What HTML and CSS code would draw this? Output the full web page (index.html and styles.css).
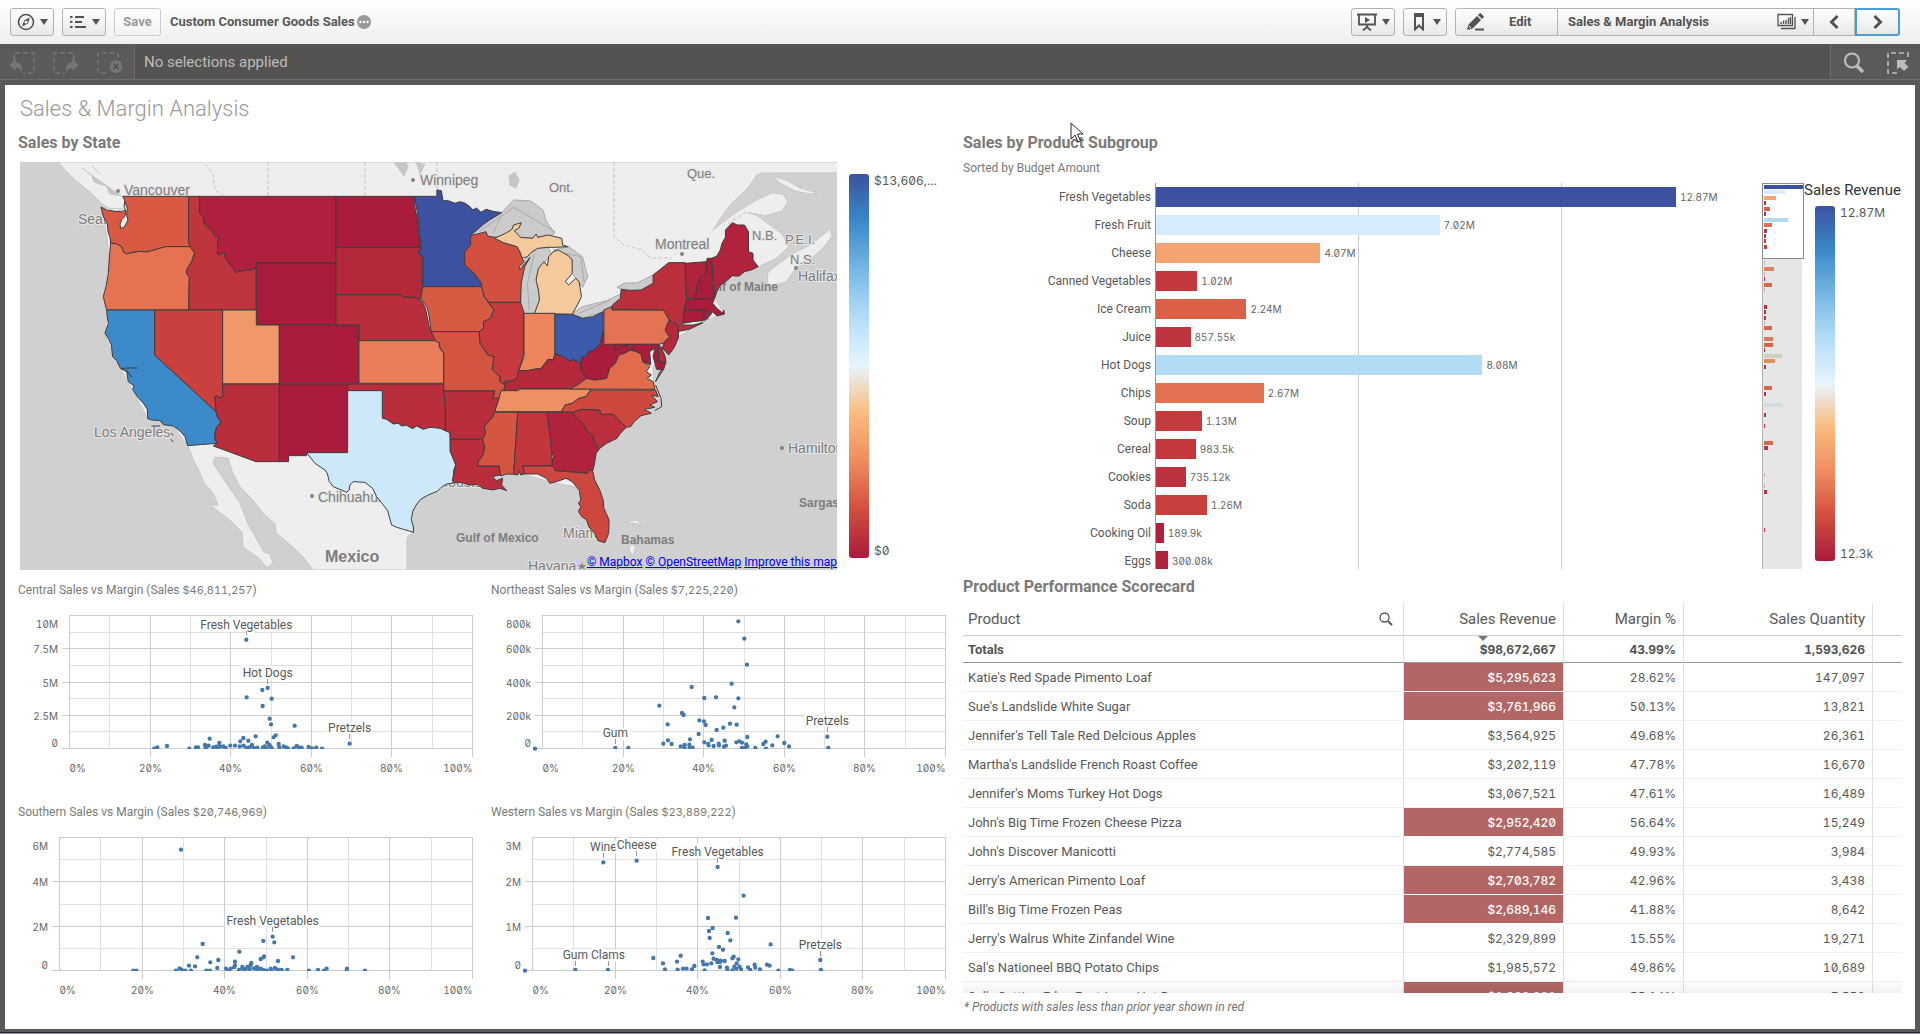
FILE: index.html
```
<!DOCTYPE html>
<html lang="en">
<head>
    <meta charset="UTF-8">
    <meta name="viewport" content="width=device-width, initial-scale=1.0">
    <title>Custom Consumer Goods Sales</title>
    <link rel="stylesheet" href="styles.css">
</head>
<body>
    <header class="toolbar">
        <button class="btn" aria-label="Navigation">
            <svg width="18" height="18" viewBox="0 0 18 18"><circle cx="9" cy="9" r="7.5" fill="none" stroke="#545352" stroke-width="1.6"/><path d="M13 4.500 10.800 10.800 5 13.500 7.200 7.200Z" fill="#545352"/><circle cx="9" cy="9" r="1.500" fill="#f6f6f6"/></svg>
            <i class="caret"></i>
        </button>
        <button class="btn" aria-label="Menu">
            <svg width="18" height="18" viewBox="0 0 18 18"><path d="M1 4h2.500M1 9h2.500M1 14h2.500M6 4h9M6 9h7M6 14h11" stroke="#545352" stroke-width="2"/></svg>
            <i class="caret"></i>
        </button>
        <button class="btn btn-save" disabled>Save</button>
        <span class="app-name">Custom Consumer Goods Sales</span>
        <svg width="14" height="14" viewBox="0 0 14 14"><circle cx="7" cy="7" r="7" fill="#9a9a9a"/><circle cx="3.500" cy="7" r="1.200" fill="#fff"/><circle cx="7" cy="7" r="1.200" fill="#fff"/><circle cx="10.500" cy="7" r="1.200" fill="#fff"/></svg>
        <div class="toolbar-right">
            <button class="btn" aria-label="Stories">
                <svg width="20" height="18" viewBox="0 0 20 18"><path d="M0 1.500h20M2 2v9.500h16V2M10 12v3M6 17.500l4-3.500 4 3.500" fill="none" stroke="#545352" stroke-width="1.800"/><path d="M8 4v6l5-3Z" fill="#545352"/></svg>
                <i class="caret"></i>
            </button>
            <button class="btn" aria-label="Bookmarks">
                <svg width="18" height="18" viewBox="0 0 18 18"><path d="M5 1h8v15.500l-4-4-4 4Z" fill="none" stroke="#545352" stroke-width="2"/><path d="M4 0h10v4H4Z" fill="#545352"/></svg>
                <i class="caret"></i>
            </button>
            <div class="btn-group">
                <button class="seg seg-edit">
                    <svg width="18" height="18" viewBox="0 0 18 18"><path d="M1 17 2.500 11.500 11 3l4 4-8.500 8.500ZM12 2l1.500-1.500c.5-.5 1-.5 1.500 0L17.500 3c.5.500.5 1 0 1.500L16 6Z" fill="#545352"/><path d="M3 13l2 2" stroke="#fff"/><path d="M9 16.500h9" stroke="#545352" stroke-width="2"/></svg>
                    <span>Edit</span>
                </button>
                <button class="seg seg-sheet">
                    <span>Sales &amp; Margin Analysis</span>
                    <svg width="20" height="18" viewBox="0 0 20 18"><path d="M1 1.500h14.500v11H1ZM18 4v11.500H4" fill="none" stroke="#545352" stroke-width="1.300"/><path d="M4 11V9M6.500 11V7.500M9 11V7M11.500 11V5M13.500 11V4" stroke="#545352" stroke-width="1.400"/></svg>
                    <i class="caret"></i>
                </button>
                <button class="seg seg-prev" aria-label="Previous sheet">
                    <svg width="12" height="14" viewBox="0 0 12 14"><path d="M9.500 1 3.500 7l6 6" fill="none" stroke="#545352" stroke-width="3"/></svg>
                </button>
                <button class="seg seg-next" aria-label="Next sheet">
                    <svg width="12" height="14" viewBox="0 0 12 14"><path d="M2.500 1l6 6-6 6" fill="none" stroke="#545352" stroke-width="3"/></svg>
                </button>
            </div>
        </div>
    </header>

    <div class="selections">
        <div class="sel-tools">
            <button class="sel-btn" aria-label="Step back" disabled>
                <svg width="26" height="22" viewBox="0 0 26 22"><path d="M5 8V1h20v20H14" fill="none" stroke="#777674" stroke-width="1.600" stroke-dasharray="5 3"/><path d="M0 13l7-6v3.500c5 0 6.500 4 6 10-1.500-3.500-3-4.500-6-4.500v3Z" fill="#777674"/></svg>
            </button>
            <button class="sel-btn" aria-label="Step forward" disabled>
                <svg width="26" height="22" viewBox="0 0 26 22"><path d="M21 8V1H1v20h11" fill="none" stroke="#777674" stroke-width="1.600" stroke-dasharray="5 3"/><path d="M26 13l-7-6v3.500c-5 0-6.500 4-6 10 1.500-3.500 3-4.500 6-4.500v3Z" fill="#777674"/></svg>
            </button>
            <button class="sel-btn" aria-label="Clear all selections" disabled>
                <svg width="26" height="22" viewBox="0 0 26 22"><path d="M21 6V1H1v20h11" fill="none" stroke="#777674" stroke-width="1.600" stroke-dasharray="5 3"/><circle cx="19" cy="14.500" r="6.500" fill="#777674"/><path d="M16.500 12l5 5m0-5-5 5" stroke="#545352" stroke-width="1.800"/></svg>
            </button>
        </div>
        <p class="sel-text">No selections applied</p>
        <div class="sel-tools sel-right">
            <button class="sel-btn" aria-label="Search">
                <svg width="22" height="22" viewBox="0 0 22 22"><circle cx="9" cy="8.500" r="7" fill="none" stroke="#bdbcba" stroke-width="2.200"/><path d="M14 14l6 6" stroke="#bdbcba" stroke-width="3.500"/></svg>
            </button>
            <button class="sel-btn" aria-label="Selections tool">
                <svg width="22" height="22" viewBox="0 0 22 22"><path d="M21 5V1H1v20h12" fill="none" stroke="#bdbcba" stroke-width="1.600" stroke-dasharray="5 3"/><path d="M10 8h10l-2.500 3 4 4-4.500 4-4-4-3 2.500Z" fill="#bdbcba"/></svg>
            </button>
        </div>
    </div>

    <main class="sheet">
        <h1>Sales &amp; Margin Analysis</h1>
        <div class="columns">
            <section class="col">
                <h2>Sales by State</h2>
                <div class="map-row">
                    <div class="map">
                        <svg class="map-svg" viewBox="0 0 818 408" preserveAspectRatio="xMinYMin slice">
                            <rect width="818" height="408" fill="#d0d0d0"/>
                            <!-- land -->
                            <g class="land">
                                <path d="M38 0 45 8 55 18 70 30 82 42 95 50 103 47 81 46 87 75 89 100 83 135 87 150 85 171 93 195 107 218 128 257 153 264 168 284 173 297 180 311 184 321 193 331 198 343 190 343 210 358 222 370 223 385 240 397 247 406 253 401 250 392 244 390 237 378 228 362 220 341 207 322 193 301 195 295 208 296 212 309 220 325 231 336 243 351 255 362 256 371 273 385 284 396 293 408H387L387 375 394 370 392 345 401 336 421 325 433 319 470 320 478 312 500 311 530 320 556 325 561 340 576 378 585 381 588 355 573 310 580 286 606 265 628 250 634 230 633 205 658 175 680 161 704 151 694 135 705 120 738 105 755 97 769 85 762 72 750 63 735 52 728 51 745 54 762 49 768 40 763 32 752 31 738 37 715 51 693 68 700 57 711 42 727 27 737 13 742 11H818V0Z"/>
                                <path d="M747 122 748 110 757 103 772 92 790 83 799 76 810 67 812 74 804 85 792 96 776 106 766 120 755 123Z"/>
                                <path d="M752 14 766 18 780 26 798 31 790 32 775 29 760 21Z"/>
                                <path d="M604 360l14-2 4 8-4-4zM610 382l6 2-3 10-4-6z"/>
                            </g>
                            <!-- water, borders and provinces -->
                            <path d="M62 6l10 8 2 6 12 4 4 8 12 2M72 4l8 8M374 0l10 14 4-9-2-5M396 0l4 12 5-10M489 14l6-4 4 8-3 8-6-3Z" fill="#c6c6c6" stroke="#c6c6c6"/>
                            <path d="M248 0v34M345 0v34M417 0v28M594 0v75l10 8 18 5 8 8h22M185 2l8 10 2 16 8 5M708 62l18-12 20 4" fill="none" stroke="#c4c4c4" stroke-dasharray="4 2"/>
                            <g transform="translate(380 -12) scale(.3444 .3333)" fill="#cbcbcb" stroke="#aaa" class="thin">
                                <path d="M205 257 225 230 295 188 330 150 380 153 415 180 425 215 450 250 430 260 350 265 330 248 270 262Z"/>
                                <path d="M355 340 375 312 400 295 430 292 440 312 412 348 397 390 405 450 390 495 365 493 350 457Z"/>
                                <path d="M445 300 490 290 530 320 545 380 530 412 500 370 500 330Z"/>
                                <path d="M500 490 530 470 600 452 645 430 640 450 590 485 530 505Z"/>
                                <path d="M630 412 650 400 690 398 735 375 735 400 700 420 645 418Z"/>
                                <path d="M230 245 330 172 450 245M270 250 295 195M375 480 370 400 390 310M480 310 525 320 535 400M520 490 610 450" fill="none"/>
                            </g>
                            <g class="place">
                                <text x="104" y="33">Vancouver</text>
                                <text x="58" y="62">Seattle</text>
                                <text x="74" y="275">Los Angeles</text>
                                <text x="298" y="340">Chihuahua</text>
                                <text x="400" y="23">Winnipeg</text>
                                <text x="635" y="87">Montreal</text>
                                <text x="778" y="119">Halifax</text>
                                <text x="768" y="291">Hamilton</text>
                                <text x="543" y="376">Miami</text>
                                <text x="508" y="409">Havana</text>
                                <text x="418" y="325">Houston</text>
                            </g>
                            <g class="place region">
                                <text x="529" y="30">Ont.</text>
                                <text x="667" y="16">Que.</text>
                                <text x="732" y="78">N.B.</text>
                                <text x="765" y="82">P.E.I.</text>
                                <text x="770" y="102">N.S.</text>
                            </g>
                            <g class="place sea">
                                <text x="758" y="129" text-anchor="end">Gulf of Maine</text>
                                <text x="436" y="380">Gulf of Mexico</text>
                                <text x="601" y="382">Bahamas</text>
                                <text x="779" y="345">Sargasso Sea</text>
                                <text x="305" y="400" class="country">Mexico</text>
                            </g>
                            <g fill="#85857b">
                                <circle cx="98" cy="29" r="2"/><circle cx="393" cy="18" r="2"/><circle cx="662" cy="92" r="2"/><circle cx="776" cy="106" r="2"/><circle cx="762" cy="286" r="2"/><circle cx="292" cy="334" r="2"/>
                                <path d="M562 400l1 3h3l-2 2 1 3-3-2-3 2 1-3-2-2h3Z"/>
                            </g>
                            <!-- western and plains states -->
                            <g class="states" transform="translate(-20 -12) scale(.3333)">
                                <path fill="#d95942" d="M303 171 320 180 345 184 365 185 378 180 374 150 368 139H566V275L570 290H497L480 295 455 302 440 306 420 304 395 308 380 312 370 305 365 290 350 282 332 279 330 262 324 245 322 220 310 200Z"/>
                                <path fill="#e8e8e8" d="M374 155 382 175 380 195 384 210 378 222 372 232 362 235 360 222 366 208 374 200 378 185 372 170Z"/>
                                <path fill="#e57251" d="M332 279 350 282 365 290 370 305 380 312 395 308 420 304 440 306 455 302 480 295 497 290H570L584 308 575 335 560 360 560 370 568 382 566 480H320L316 465 310 440 318 410 325 370 329 310Z"/>
                                <path fill="#c0343c" d="M566 139H599V190L612 205 612 222 635 240 645 258 655 260 652 312 660 315 672 306 676 322 690 345 698 352 708 368 720 363 750 360 762 355 769 362V480H566L568 382 560 370 560 360 575 335 584 308 570 290 566 275Z"/>
                                <path fill="#b01f3d" d="M599 139H1008V339H769V362L762 355 750 360 720 363 708 368 698 352 690 345 676 322 672 306 660 315 652 312 655 260 645 258 635 240 612 222 612 205 599 190Z"/>
                                <path fill="#ab1b3b" d="M769 339H1008V525H769Z"/>
                                <path fill="#3c8ac9" d="M320 480H464V615L648 785 652 800 663 816 650 832 645 850 645 868 652 880 563 887 555 860 540 843 520 828 490 824 480 812 455 810 443 806 442 778 430 760 412 740 398 718 402 708 385 695 380 665 362 656 350 632 338 620 334 585 325 565 315 550 325 520 322 500Z"/>
                                <path fill="none" d="M365 656 382 654 412 654M380 660l15 22M455 828h25M512 850l8 6M512 868l9 8"/>
                                <path fill="#c9403e" d="M464 480H668V740L660 744 652 738 645 740 648 785 464 615Z"/>
                                <path fill="#f0986a" d="M668 480H769V525H838V702H668Z"/>
                                <path fill="#ab1b3b" d="M838 525H1077V700H838Z"/>
                                <path fill="#b92d3c" d="M668 702H838V935H768L640 888 652 880 645 868 645 850 650 832 663 816 652 800 648 785 645 740 652 738 660 744 668 740Z"/>
                                <path fill="#ab1b3b" d="M838 702H1043V908H920V917H866V935H838Z"/>
                                <path fill="#ab1b3b" d="M1008 139H1243L1246 180 1254 210 1256 250 1264 292H1008Z"/>
                                <path fill="#b5283c" d="M1008 292H1264L1256 308 1268 322V410L1264 425 1262 450 1240 442 1215 442 1198 434H1008Z"/>
                                <path fill="#b92d3c" d="M1008 434H1198L1215 442 1240 442 1262 450 1275 470 1282 500 1289 538 1308 572H1077V525H1008Z"/>
                                <path fill="#e87d57" d="M1077 572H1308L1318 580 1318 592 1331 610V700H1077Z"/>
                                <path fill="#b92d3c" d="M1043 702H1331L1336 770V842L1320 835 1290 832 1270 838 1250 828 1238 836 1220 826 1205 828 1195 820 1180 822 1160 808 1147 805V722H1043Z"/>
                                <path fill="#cde9f9" d="M1043 722H1147V805L1160 808 1180 822 1195 820 1205 828 1220 826 1238 836 1250 828 1270 838 1290 832 1320 835 1336 842 1350 848 1351 905 1362 925 1367 945 1360 965 1362 990 1358 1000 1340 1002 1324 1012 1312 1024 1285 1035 1262 1048 1248 1066 1238 1085 1234 1108 1240 1130 1241 1147 1210 1138 1190 1132 1175 1125 1163 1082 1150 1065 1130 1040 1118 1015 1095 997 1060 995 1050 1005 1048 1020 1040 1027 1000 1010 988 995 982 970 975 960 945 940 920 908H1043Z"/>
                            </g>
                            <!-- eastern states -->
                            <g class="states" transform="translate(380 -12) scale(.3444 .3333)">
                                <path fill="#3c51a0" d="M42 139H107V120L120 122 125 152 140 152 160 160 175 155 190 160 205 172 212 180 222 174 235 187 250 178 270 184 295 188 260 210 240 225 205 257V285L188 305 188 345 215 370 237 400V410H66V322L54 308 62 292 56 250 54 210Z"/>
                                <path fill="#d75a43" d="M66 410H237L245 440 258 460 273 480 262 505 243 515 243 535 230 545H90L85 500 78 470 66 455 62 440Z"/>
                                <path fill="#d35040" d="M205 257 250 245 254 258 275 262 300 278 340 290 348 305 355 325 360 335 346 350 348 358 378 322 362 350 352 400 350 457H258L245 440 237 410V400L215 370 188 345V305L205 285Z"/>
                                <path fill="#f4ca9c" d="M275 265 310 248 325 238 330 225 352 218 345 235 332 242 350 262 385 265 395 252 400 262 430 255 470 265 472 285 488 290 450 292 430 292 400 295 380 308 370 320 355 325 348 305 340 290 300 278Z"/>
                                <path fill="#f4ca9c" d="M445 305 460 300 490 318 500 330 500 370 480 395 490 405 510 385 520 395 527 440 515 465 500 493 390 491 405 450 402 420 395 390 402 355 418 335 428 348 432 320Z"/>
                                <path fill="#c63a3d" d="M258 457H350L360 490V600L355 630 345 660 340 685 322 695 307 690 303 705 290 695 290 680 268 660 272 620 255 615 232 580 230 545 243 535 243 515 262 505 273 480Z"/>
                                <path fill="#ee855b" d="M360 490H450V612L445 630 430 628 410 655 390 658 370 662 345 662 360 620Z"/>
                                <path fill="#3c5bab" d="M450 493H500L530 505 560 500 590 485V545L582 580 575 590 560 602 548 605 540 620 528 622 525 640 505 630 490 632 475 620 450 612Z"/>
                                <path fill="#b5283c" d="M450 612 475 620 490 632 505 630 525 640 524 655 528 665 542 685 515 705 492 717 340 716V722H303L307 695 322 695 340 685 345 662 370 662 390 658 410 655 430 628 445 630Z"/>
                                <path fill="#d35440" d="M90 545H230L232 580 255 615 272 620 268 660 290 680 290 695 305 705 300 725 288 745H270L275 723H127V610L115 590 115 578 105 575Z"/>
                                <path fill="#b92d3c" d="M127 723H275L270 745H288L275 785 270 800 245 830 248 850 240 868H146L145 848 132 842 132 770Z"/>
                                <path fill="#b92d3c" d="M146 868H240L246 890 242 915 230 930 225 948H288L290 975 268 980 280 992 298 985 295 1005 310 1022 290 1015 270 1020 240 1015 225 1003 200 1005 180 998 155 998 152 990 162 945 146 905Z"/>
                                <path fill="#ef8f63" d="M293 722H345V717H555L540 740 520 745 500 760 480 765 468 785H275L288 745Z"/>
                                <path fill="#d55541" d="M275 787H342L330 973 310 972 292 978 288 948H225L230 930 242 915 246 890 240 868 248 850 245 830 270 800Z"/>
                                <path fill="#c2363c" d="M342 787H427L440 860 447 890 440 915 445 948H357L362 972 350 975 345 962 342 975 330 973Z"/>
                                <path fill="#b1223c" d="M427 787H500L510 800 535 825 545 845 560 858 565 880 580 895 570 910 565 940 560 962 550 960 545 970 450 962 440 945 445 920 440 900Z"/>
                                <path fill="#cd473e" d="M357 948H445L450 962 545 970 550 958 560 965 565 990 580 1020 590 1050 592 1075 607 1110 606 1150 595 1178 575 1172 565 1150 548 1130 542 1110 528 1100 518 1085 525 1070 518 1060 525 1050 520 1020 500 995 482 985 455 995 435 1000 425 985 400 972 362 972Z"/>
                                <path fill="#bb2e3c" d="M500 787 525 778 580 780 585 793H620L657 832 640 850 630 865 600 880 580 895 565 880 560 858 545 845 535 825 510 800Z"/>
                                <path fill="#cf483e" d="M468 785 480 765 500 760 520 745 540 740 555 720H742L750 740 730 735 748 755 725 765 740 772 710 778 730 790 700 797 680 815 670 830 657 832 620 793H585L580 780 525 778 500 787Z"/>
                                <path fill="none" d="M742 705 758 745 760 770 740 782"/>
                                <path fill="#e26b4c" d="M492 717 515 705 542 685 565 690 600 685 608 655 625 640 635 615 655 608 668 600 690 605 700 612 705 635 725 650 715 665 730 675 718 685 735 695 740 718ZM765 658 755 665 742 695Z"/>
                                <path fill="#ab1b3b" d="M590 545 592 583H625V603L640 592 660 585 680 603 668 600 655 608 635 615 625 640 608 655 600 685 565 690 542 685 528 665 524 655 528 622 540 620 548 605 560 602 575 590 582 580Z"/>
                                <path fill="#e37352" d="M592 480 615 470V480H765L782 510 770 540 782 560 765 580 752 583H592Z"/>
                                <path fill="#ab1b3b" d="M625 583H750L752 637H772L765 660 745 658 735 620 740 595 725 605 728 645 705 635 700 612 685 605 665 586 640 592 625 603Z"/>
                                <path fill="#b5283c" d="M750 583 758 590 770 620 772 637H752Z"/>
                                <path fill="#b5283c" d="M782 510 810 528 808 565 795 595 780 615 762 595 765 580 782 560 770 540Z"/>
                                <path fill="#bb2e3c" d="M617 478V465L640 445 642 418 670 422 700 420 735 400V375L780 338H828L832 445 825 478 820 525 850 525 880 518 840 538 805 545 810 528 782 510 765 480Z"/>
                                <path fill="#b1223c" d="M828 340 890 335 888 370 870 385 862 410 858 445H832Z"/>
                                <path fill="#ab1b3b" d="M890 335 892 325 905 325 910 420 915 440 895 447H858L862 410 870 385 888 370Z"/>
                                <path fill="#ab1b3b" d="M832 447H895L915 440 908 460 920 475 938 490 940 480 942 492 920 498 908 485 898 500 893 480H825Z"/>
                                <path fill="#ab1b3b" d="M825 480H880V512L850 515 822 520ZM882 480H893L895 505 882 512Z"/>
                                <path fill="#b1223c" d="M905 325 920 318 930 300 935 280 945 262 945 240 965 218 980 225 1000 225 1012 245V305L1025 310 1025 330 1040 350 1020 360 1000 365 985 378 965 378 945 395 930 405 920 425 915 440Z"/>
                            </g>
                        </svg>
                        <div class="attribution">
                            <a href="#">© Mapbox</a> <a href="#">© OpenStreetMap</a> <a href="#">Improve this map</a>
                        </div>
                    </div>
                    <div class="legend map-legend">
                        <div class="ramp"></div>
                        <div class="legend-labels num"><span>$13,606,...</span><span>$0</span></div>
                    </div>
                </div>
                <div class="scatters">
                    <figure class="scatter" id="central">
                        <figcaption>Central Sales vs Margin (Sales <span class="num">$46,811,257</span>)</figcaption>
                    </figure>
                    <figure class="scatter" id="northeast">
                        <figcaption>Northeast Sales vs Margin (Sales <span class="num">$7,225,220</span>)</figcaption>
                    </figure>
                    <figure class="scatter" id="southern">
                        <figcaption>Southern Sales vs Margin (Sales <span class="num">$20,746,969</span>)</figcaption>
                    </figure>
                    <figure class="scatter" id="western">
                        <figcaption>Western Sales vs Margin (Sales <span class="num">$23,889,222</span>)</figcaption>
                    </figure>
                </div>
            </section>

            <section class="col">
                <h2 class="tight">Sales by Product Subgroup</h2>
                <p class="subtitle">Sorted by Budget Amount</p>
                <div class="bar-row">
                    <div class="bars" id="bars"></div>
                    <svg class="minimap" id="minimap" width="42" height="386" viewBox="0 0 42 386"></svg>
                    <div class="bar-legend">
                        <p class="legend-title">Sales Revenue</p>
                        <div class="legend">
                            <div class="ramp"></div>
                            <div class="legend-labels num"><span>12.87M</span><span>12.3k</span></div>
                        </div>
                    </div>
                </div>
                <h2 class="table-title">Product Performance Scorecard</h2>
                <div class="table-clip">
                    <table>
                        <colgroup><col class="c-product"><col class="c-revenue"><col class="c-margin"><col class="c-qty"><col class="c-pad"></colgroup>
                        <thead>
                            <tr>
                                <th class="left">
                                    <div class="th-flex">Product
                                        <button class="th-search" aria-label="Search product"><svg width="14" height="14" viewBox="0 0 14 14"><circle cx="5.500" cy="5.500" r="4.500" fill="none" stroke="#545352" stroke-width="1.300"/><path d="M9 9l4 4" stroke="#545352" stroke-width="2"/></svg></button>
                                    </div>
                                </th>
                                <th class="sorted">Sales Revenue</th><th>Margin %</th><th>Sales Quantity</th><th></th>
                            </tr>
                            <tr class="totals"><td>Totals</td><td>$98,672,667</td><td>43.99%</td><td>1,593,626</td><td></td></tr>
                        </thead>
                        <tbody>
                            <tr><td>Katie's Red Spade Pimento Loaf</td><td class="low">$5,295,623</td><td>28.62%</td><td>147,097</td><td></td></tr>
                            <tr><td>Sue's Landslide White Sugar</td><td class="low">$3,761,966</td><td>50.13%</td><td>13,821</td><td></td></tr>
                            <tr><td>Jennifer's Tell Tale Red Delcious Apples</td><td>$3,564,925</td><td>49.68%</td><td>26,361</td><td></td></tr>
                            <tr><td>Martha's Landslide French Roast Coffee</td><td>$3,202,119</td><td>47.78%</td><td>16,670</td><td></td></tr>
                            <tr><td>Jennifer's Moms Turkey Hot Dogs</td><td>$3,067,521</td><td>47.61%</td><td>16,489</td><td></td></tr>
                            <tr><td>John's Big Time Frozen Cheese Pizza</td><td class="low">$2,952,420</td><td>56.64%</td><td>15,249</td><td></td></tr>
                            <tr><td>John's Discover Manicotti</td><td>$2,774,585</td><td>49.93%</td><td>3,984</td><td></td></tr>
                            <tr><td>Jerry's American Pimento Loaf</td><td class="low">$2,703,782</td><td>42.96%</td><td>3,438</td><td></td></tr>
                            <tr><td>Bill's Big Time Frozen Peas</td><td class="low">$2,689,146</td><td>41.88%</td><td>8,642</td><td></td></tr>
                            <tr><td>Jerry's Walrus White Zinfandel Wine</td><td>$2,329,899</td><td>15.55%</td><td>19,271</td><td></td></tr>
                            <tr><td>Sal's Nationeel BBQ Potato Chips</td><td>$1,985,572</td><td>49.86%</td><td>10,689</td><td></td></tr>
                            <tr><td>Sal's Cutting Edge Foot-Long Hot Dogs</td><td class="low">$1,982,981</td><td>55.14%</td><td>7,552</td><td></td></tr>
                        </tbody>
                    </table>
                </div>
                <p class="note">* Products with sales less than prior year shown in red</p>
            </section>
        </div>
    </main>
    <div class="edge"></div>
    <svg class="pointer" width="14" height="21" viewBox="0 0 14 21"><path d="M1 1v16l4-4 3 7 2.500-1-3-7H13Z" fill="#fff" stroke="#223"/></svg>
    <script src="charts.js"></script>
</body>
</html>
```

FILE: styles.css
```
* {
    box-sizing: border-box;
}
body {
    margin: 0;
    height: 100vh;
    display: flex;
    flex-direction: column;
    overflow: hidden;
    background: #595856;
    color: #595959;
    font-family: Roboto, "Liberation Sans", sans-serif;
    font-size: 13px;
}
h1, h2, p, figure {
    margin: 0;
}
button {
    font: inherit;
    color: #545352;
    cursor: pointer;
}
svg {
    flex-shrink: 0;
}
.num {
    font-family: Inter, Roboto, sans-serif;
    font-feature-settings: "zero", "tnum";
}

/* toolbar */
.toolbar {
    height: 44px;
    flex-shrink: 0;
    display: flex;
    align-items: center;
    padding: 0 20px 1px 10px;
    background: linear-gradient(#fff, #efefef);
    font-weight: bold;
}
.btn {
    width: 44px;
    height: 28px;
    margin-right: 8px;
    padding: 0;
    display: flex;
    align-items: center;
    justify-content: center;
    gap: 5px;
    border: 1px solid #b3b3b3;
    border-radius: 3px;
    background: linear-gradient(#fff, #e8e8e8);
}
.btn-save {
    width: 47px;
    color: #9a9a9a;
    border-color: #ccc;
    background: linear-gradient(#fff, #f2f2f2);
}
.caret {
    border: 4px solid transparent;
    border-top: 6px solid #545352;
    border-bottom: 0;
}
.app-name {
    margin: 0 2px 0 1px;
}
.toolbar-right {
    margin-left: auto;
    display: flex;
    align-items: center;
}
.btn-group {
    display: flex;
}
.seg {
    height: 28px;
    display: flex;
    align-items: center;
    justify-content: center;
    padding: 0 10px;
    border: 1px solid #b3b3b3;
    border-left-width: 0;
    background: linear-gradient(#fff, #e8e8e8);
}
.seg-edit {
    width: 103px;
    justify-content: flex-start;
    gap: 25px;
    border-left-width: 1px;
    border-radius: 3px 0 0 3px;
}
.seg-sheet {
    width: 256px;
    gap: 4px;
    padding-right: 4px;
}
.seg-sheet span {
    margin-right: auto;
}
.seg-prev {
    width: 41px;
}
.seg-next {
    width: 45px;
    border: 2px solid #4a9fd3;
    border-radius: 0 3px 3px 0;
}

/* selections bar */
.selections {
    height: 36px;
    flex-shrink: 0;
    display: flex;
    background: #545352;
    border-bottom: 1px solid #6e6d6b;
}
.sel-tools {
    width: 135px;
    display: flex;
    align-items: center;
    gap: 18px;
    padding-left: 9px;
    background: #5b5a58;
    border-right: 1px solid #6e6d6b;
}
.sel-btn {
    display: flex;
    padding: 2px 0 0;
    border: 0;
    background: none;
}
.sel-text {
    flex: 1;
    padding-left: 9px;
    font-size: 15px;
    line-height: 36px;
    color: #bdbcba;
}
.sel-right {
    width: 90px;
    gap: 22px;
    padding-left: 12px;
    border-right: 0;
    border-left: 1px solid #6e6d6b;
}

/* sheet */
.sheet {
    flex: 1;
    min-height: 0;
    margin: 5px 5px 3px;
    padding: 9px 13px 0;
    background: #fff;
    overflow: hidden;
}
h1 {
    padding-left: 2px;
    font-size: 22px;
    font-weight: 300;
    line-height: 30px;
    color: #999;
}
h2 {
    margin-bottom: 8px;
    font-size: 16px;
    line-height: 22px;
    color: #7b7a78;
}
.columns {
    display: grid;
    grid-template-columns: 927fr 939fr;
    gap: 18px;
    margin-top: 8px;
}
.col {
    min-width: 0;
}
.map-row {
    height: 408px;
    display: flex;
    gap: 12px;
    padding-left: 2px;
}
.map {
    position: relative;
    flex: 1;
    overflow: hidden;
}
.map-svg {
    display: block;
    width: 100%;
    height: 100%;
}
.land {
    fill: #eee;
    stroke: #c8c8c8;
    stroke-width: 1;
}
.states path {
    stroke: #3d3d3d;
    stroke-width: 1px;
    stroke-linejoin: round;
    vector-effect: non-scaling-stroke;
}
.thin path {
    vector-effect: non-scaling-stroke;
}
.place {
    font-family: "Liberation Sans", sans-serif;
    font-size: 14px;
    fill: #7d7d7d;
    stroke: #e6e6e6;
    stroke-width: 2px;
    paint-order: stroke;
}
.region {
    font-size: 13px;
}
.sea {
    font-size: 12px;
    font-weight: bold;
    stroke: none;
}
.country {
    font-size: 16px;
}
.attribution {
    position: absolute;
    right: 0;
    bottom: 0;
    font-size: 12px;
    line-height: 16px;
    white-space: nowrap;
}
.attribution a {
    color: #0000ee;
}
.legend {
    display: flex;
    gap: 5px;
}
.ramp {
    width: 20px;
    border-radius: 3px;
    background: linear-gradient(#3c52a1, #3a89c9, #77b7e5, #b4ddf7, #e6f5fe, #fabb7d, #ef8b5f, #d24d3e, #ab1a3c);
}
.legend-labels {
    display: flex;
    flex-direction: column;
    justify-content: space-between;
    font-size: 12px;
    line-height: 14px;
}
.map-legend {
    width: 96px;
    padding: 12px 0;
}

/* scatter plots */
.scatters {
    display: grid;
    grid-template-columns: 1fr 1fr;
    column-gap: 19px;
    row-gap: 22px;
    margin-top: 10px;
}
figcaption, .subtitle {
    font-size: 12px;
    line-height: 20px;
    color: #7b7a78;
    white-space: nowrap;
}
figcaption .num {
    font-size: 11px;
}
.scatter svg {
    display: block;
    width: 100%;
    overflow: visible;
}
.grid-major {
    stroke: #ccc;
}
.grid-minor {
    stroke: #e0e0e0;
}
.grid-major, .grid-minor {
    fill: none;
    stroke-width: 1;
    shape-rendering: crispEdges;
}
.axis-text {
    font-family: Inter, Roboto, sans-serif;
    font-feature-settings: "zero", "tnum";
    font-size: 10px;
    fill: #666;
}
.dots {
    stroke: #4477aa;
    stroke-width: 13;
    stroke-linecap: round;
}
.dot-label {
    font-size: 12px;
    fill: #595959;
    stroke: #fff;
    stroke-width: 5px;
    paint-order: stroke;
}

/* bar chart */
h2.tight {
    margin-bottom: 4px;
}
.bar-row {
    display: flex;
    height: 386px;
    margin-top: 5px;
}
.bars {
    flex: 1;
    overflow: hidden;
    display: grid;
    grid-template-columns: 192px 1fr;
    grid-auto-rows: 28px;
}
.bar-label {
    padding-right: 4px;
    font-size: 12px;
    line-height: 28px;
    text-align: right;
}
.bar-cell {
    display: flex;
    align-items: center;
    gap: 4px;
    border-left: 1px solid #999;
    background: linear-gradient(90deg, transparent 202px, #ccc 202px, #ccc 203px, transparent 203px) 0 0 / 203px 100%;
}
.bar {
    height: 20px;
}
.bar-cell .num {
    font-size: 10px;
    color: #666;
}
.bar-legend {
    width: 98px;
    font-size: 12px;
}
.legend-title {
    font-size: 15px;
    line-height: 18px;
    margin-bottom: 7px;
    margin-top: -2px;
    white-space: nowrap;
    color: #333;
}
.bar-legend .legend {
    height: 355px;
    padding-left: 11px;
}

/* table */
h2.table-title {
    margin: 7px 0 5px;
}
.table-clip {
    position: relative;
    height: 390px;
    overflow: hidden;
}
.table-clip::after {
    content: "";
    position: absolute;
    left: 0;
    right: 0;
    bottom: 0;
    height: 14px;
    background: linear-gradient(transparent, rgba(0, 0, 0, .05));
}
table {
    width: 100%;
    table-layout: fixed;
    border-collapse: separate;
    border-spacing: 0;
}
.c-revenue { width: 160px; }
.c-margin { width: 120px; }
.c-qty { width: 189px; }
.c-pad { width: 29px; }
th, td {
    padding: 0 7px 0 5px;
    text-align: right;
    border-right: 1px solid #e0e0e0;
}
th:last-child, td:last-child {
    border-right: 0;
}
th {
    height: 33px;
    font-size: 15px;
    font-weight: normal;
    border-bottom: 1px solid #ccc;
}
.th-flex {
    display: flex;
    justify-content: space-between;
    align-items: center;
}
.th-search {
    display: flex;
    padding: 0 3px;
    border: 0;
    background: none;
}
.sorted {
    position: relative;
}
.sorted::after {
    content: "";
    position: absolute;
    left: 74px;
    bottom: -6px;
    border: 5px solid transparent;
    border-top-color: #7b7a78;
    border-bottom: 0;
}
td {
    height: 29px;
    font-family: Inter, Roboto, sans-serif;
    font-feature-settings: "zero", "tnum";
    font-size: 12px;
    border-bottom: 1px solid #f0f0f0;
}
td:first-child {
    font-family: Roboto, sans-serif;
    font-size: 13px;
    text-align: left;
}
.totals td {
    height: 27px;
    font-weight: bold;
    color: #545352;
    border-bottom-color: #999;
}
td.low {
    background: #b26766;
    color: #fff;
    font-weight: 500;
    border-bottom-color: #fff;
}
.note {
    margin-top: 4px;
    padding-left: 1px;
    font-size: 12px;
    font-style: italic;
    line-height: 20px;
    color: #737373;
}
.edge {
    height: 2px;
    flex-shrink: 0;
    background: #8c94a6;
    border-top: 1px solid #22242c;
}
.pointer {
    position: absolute;
    left: 1070px;
    top: 122px;
}
```

FILE: charts.js
```
// dot coordinates are stored at 3x, [dx, dy] moves them onto the plot
const scatters = [
    {
        id: 'central', x0: 52, parts: 8, ticks: ['10M', '7.5M', '5M', '2.5M', '0'], shift: [-18, -26],
        dots: '739,197 787,348 803,342 740,370 815,374 788,396 809,434 813,451 884,455 1049,509 629,494 730,492 767,487 821,490 827,484 721,502 745,500 658,507 802,506 836,510 615,513 626,515 670,517 691,515 705,515 719,517 731,515 756,513 808,513 851,517 890,516 501,516 472,520 463,524 568,524 588,520 594,520 617,523 640,520 649,518 653,523 660,518 677,522 740,522 748,520 761,522 772,521 789,520 794,517 800,523 812,518 815,522 838,520 858,520 864,523 881,523 896,520 905,521 926,519 936,523 949,521 966,524',
        labels: [['Fresh Vegetables', 739, 165, 184], ['Hot Dogs', 803, 309, 329], ['Pretzels', 1049, 474, 496]]
    },
    {
        id: 'northeast', x0: 52, parts: 8, ticks: ['800k', '600k', '400k', '200k', '0'], shift: [-11, -26],
        dots: '165,524 406,522 445,522 775,142 793,194 801,272 755,329 635,339 673,372 708,370 775,373 538,395 763,400 606,417 611,423 658,439 672,442 677,453 563,451 710,468 730,461 750,449 770,452 656,480 802,489 893,487 1042,488 1045,522 550,509 564,499 575,510 630,496 673,505 685,510 686,514 695,498 701,516 716,509 717,514 734,500 738,515 732,518 769,505 778,502 786,506 799,511 802,517 786,522 796,522 826,522 850,510 857,503 858,524 877,514 913,507 927,517 602,517 614,513 614,522 628,512 629,519 638,521',
        labels: [['Gum', 406, 489, 510], ['Pretzels', 1042, 453, 475]]
    },
    {
        id: 'southern', x0: 42, parts: 6, ticks: ['6M', '4M', '2M', '0'], shift: [-18, -28],
        dots: '543,167 608,450 818,428 790,441 823,445 718,473 592,490 879,490 631,505 655,498 782,495 792,487 791,490 834,501 705,503 705,514 754,507 752,513 567,515 585,517 652,522 678,524 692,524 703,519 727,519 742,519 771,519 400,530 409,530 528,530 539,523 544,527 556,530 573,530 619,530 630,530 684,530 717,528 730,525 736,528 749,525 762,523 772,528 782,524 790,528 800,530 812,524 814,530 825,522 834,527 845,528 862,528 927,530 954,528 972,530 980,524 1041,524 1040,530 1095,530',
        labels: [['Fresh Vegetables', 818, 393, 413]]
    },
    {
        id: 'western', x0: 42, parts: 6, ticks: ['3M', '2M', '1M', '0'], shift: [-11, -28],
        dots: '135,530 286,528 384,528 370,205 470,200 713,219 791,305 684,372 768,371 698,402 687,411 689,432 743,417 751,439 872,451 717,459 729,467 697,478 520,492 602,485 591,503 701,494 711,498 722,500 734,501 761,488 757,493 775,496 668,503 671,511 681,511 694,508 712,504 720,504 770,508 549,508 643,516 720,519 741,521 763,518 779,518 804,520 824,512 826,521 861,512 869,515 1021,498 1023,528 555,526 593,527 609,524 620,524 636,526 674,529 742,526 757,529 769,524 783,526 811,528 840,526 895,530 930,528 937,530',
        labels: [['Wine', 370, 170, 191], ['Cheese', 470, 165, 186], ['Fresh Vegetables', 713, 186, 206], ['Gum', 286, 495, 515], ['Clams', 384, 495, 515], ['Pretzels', 1021, 465, 487]]
    }
];

scatters.forEach(c => {
    const top = 16, bottom = 149, right = 455;
    const width = right - c.x0;
    let major = '', minor = '', text = '';

    for (let i = 0; i <= 10; i++) {
        const x = Math.round(c.x0 + width * i / 10) - 0.5;
        if (i % 2) {
            minor += `M${x} ${top}V${bottom}`;
        } else {
            major += `M${x} ${top}V${bottom + (i ? 8 : 0)}`;
            const anchor = i === 0 ? 'start' : i === 10 ? 'end' : 'middle';
            text += `<text class="axis-text" x="${x}" y="172" text-anchor="${anchor}">${i * 10}%</text>`;
        }
    }
    for (let i = 0; i <= c.parts; i++) {
        const y = Math.round(top + (bottom - top) * i / c.parts) - 0.5;
        if (i % 2) {
            minor += `M${c.x0} ${y}H${right}`;
        } else {
            major += `M${i ? c.x0 - 8 : c.x0 - 1} ${y}H${right}`;
            const shift = i === 0 ? 12 : i === c.parts ? -2 : 4;
            text += `<text class="axis-text" x="${c.x0 - 12}" y="${y + shift}" text-anchor="end">${c.ticks[i / 2]}</text>`;
        }
    }
    const dots = c.dots.split(' ').map(p => 'M' + p + 'h0').join('');
    const labels = c.labels.map(([name, x, y, tick]) => {
        const lx = x / 3 + c.shift[0];
        const ly = y / 3 + c.shift[1];
        return `<text class="dot-label" x="${lx}" y="${ly}" text-anchor="middle">${name}</text>` +
            `<path class="grid-major" style="stroke:#999" d="M${lx} ${ly + 2}V${tick / 3 + c.shift[1]}"/>`;
    }).join('');

    document.getElementById(c.id).insertAdjacentHTML('beforeend',
        `<svg viewBox="0 0 454 180">
            <clipPath id="clip-${c.id}"><path d="M0 0H454V149H50V160H0Z"/></clipPath>
            <path class="grid-minor" d="${minor}"/><path class="grid-major" d="${major}"/>${text}
            ${labels}
            <g clip-path="url(#clip-${c.id})"><path class="dots" transform="translate(${c.shift}) scale(.3333)" d="${dots}"/></g>
        </svg>`);
});

const bars = [
    ['Fresh Vegetables', 12.87, '12.87M', '#3c51a0'],
    ['Fresh Fruit', 7.02, '7.02M', '#d4ecfd'],
    ['Cheese', 4.07, '4.07M', '#f4a470'],
    ['Canned Vegetables', 1.02, '1.02M', '#c4383d'],
    ['Ice Cream', 2.24, '2.24M', '#db6048'],
    ['Juice', 0.857, '857.55k', '#c0343d'],
    ['Hot Dogs', 8.08, '8.08M', '#b2dbf6'],
    ['Chips', 2.67, '2.67M', '#e27151'],
    ['Soup', 1.13, '1.13M', '#c53a3d'],
    ['Cereal', 0.983, '983.5k', '#c3373d'],
    ['Cookies', 0.735, '735.12k', '#bd303d'],
    ['Soda', 1.26, '1.26M', '#c83f3d'],
    ['Cooking Oil', 0.19, '189.9k', '#b0203c'],
    ['Eggs', 0.3, '300.08k', '#b3243c']
];
document.getElementById('bars').innerHTML = bars.map(([name, value, label, color]) =>
    `<div class="bar-label">${name}</div>
    <div class="bar-cell"><div class="bar" style="width:${(value / 15 * 100).toFixed(2)}%;background:${color}"></div><span class="num">${label}</span></div>`
).join('');

// [row, width, colour] of each bar in the overview strip
const red = '#b8323f', orange = '#d2694c', pink = '#d8a9b0';
const overview = [
    [0, 39, '#3c51a0'], [1, 21, '#d4ecfd'], [2, 12, '#f4a470'], [3, 2, red], [4, 6, '#db6048'], [5, 2, red],
    [6, 24, '#b2dbf6'], [7, 8, '#e27151'], [8, 3, red], [9, 2, red], [10, 2, red], [11, 3, '#c83f3d'],
    [14, 1, pink], [15, 10, '#d9845c'], [16, 1, pink], [17, 1, red], [18, 8, orange], [19, 1, pink],
    [22, 3, red], [23, 2, red], [24, 2, red], [25, 1, pink], [26, 8, orange], [28, 9, '#d77c58'], [29, 9, orange],
    [30, 1, red], [31, 18, '#d3cdc0'], [32, 11, '#df905f'], [33, 2, red], [37, 8, orange], [38, 2, red],
    [40, 19, '#d1dbe2'], [42, 2, red], [44, 1, red], [47, 9, orange], [48, 4, red], [53, 1, pink], [55, 1, pink],
    [56, 3, red], [63, 1, red]
];
document.getElementById('minimap').innerHTML =
    '<rect width="40" height="386" fill="#e6e6e6"/><path d="M.5 0V386" stroke="#b3b3b3"/>' +
    '<rect x=".5" y=".5" width="41" height="75" fill="#fff" stroke="#8c8c8c"/>' +
    overview.map(([row, w, color]) => `<rect x="2" y="${Math.round(row * 5.44) + 2}" width="${w}" height="4" fill="${color}"/>`).join('');
```
